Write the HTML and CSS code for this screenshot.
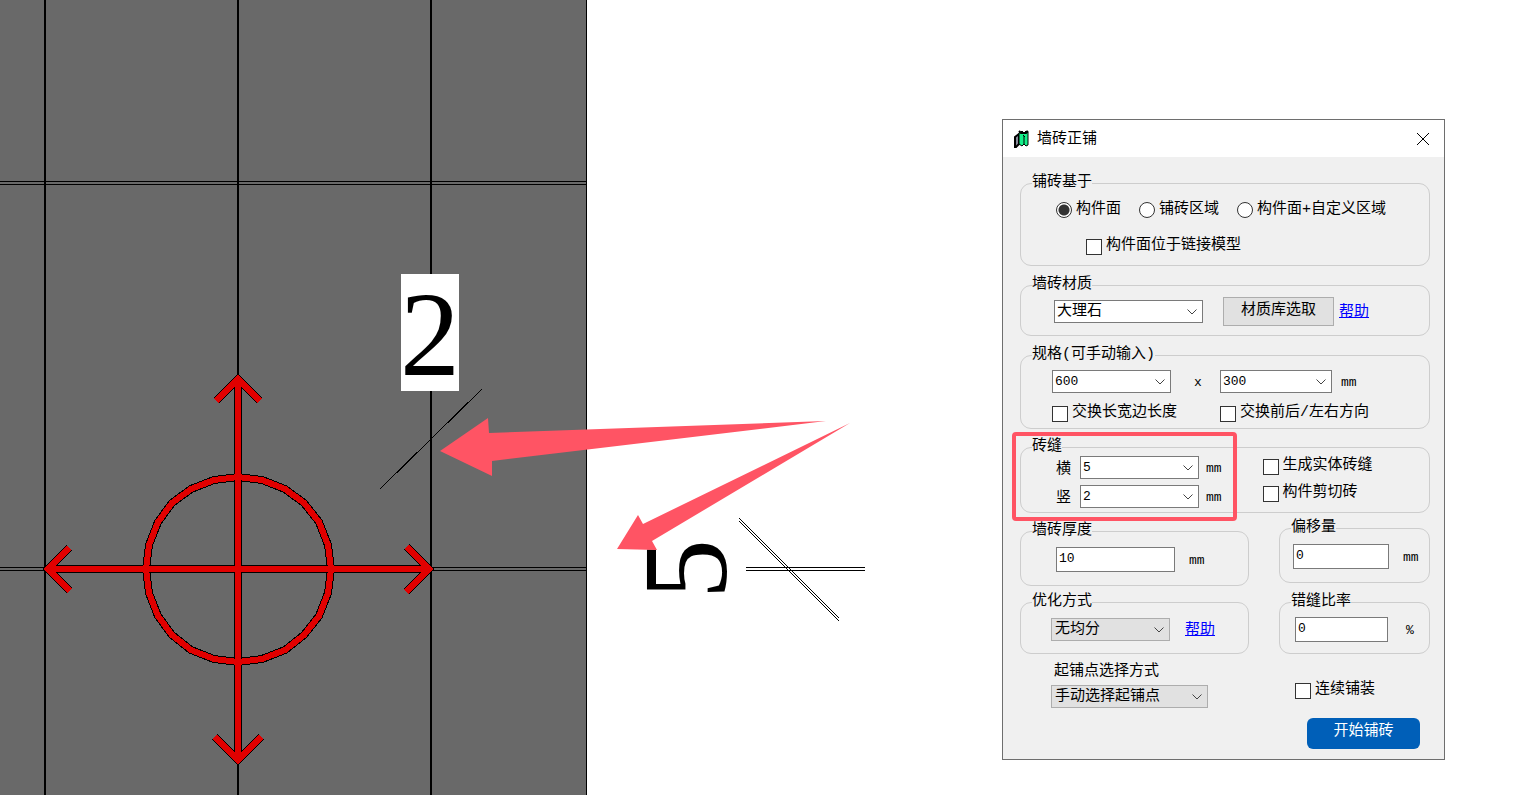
FILE: index.html
```html
<!DOCTYPE html>
<html lang="zh-CN">
<head>
    <meta charset="UTF-8">
    <meta name="viewport" content="width=device-width, initial-scale=1.0">
    <title>墙砖正铺</title>
    <link rel="stylesheet" href="styles.css">
</head>
<body>
    <main class="workspace">
        <svg class="drawing" role="img" aria-label="砖缝示意">
            <!-- wall and joints -->
            <rect class="wall" x="0" y="0" width="586" height="100%"/>
            <g class="joint" shape-rendering="crispEdges">
                <rect x="586" y="0" width="1" height="100%"/>
                <rect x="44" y="0" width="2" height="100%"/>
                <rect x="237" y="0" width="2" height="100%"/>
                <rect x="430" y="0" width="2" height="100%"/>
                <rect x="0" y="181" width="586" height="1"/>
                <rect x="0" y="184" width="586" height="1"/>
                <rect x="0" y="567" width="586" height="1"/>
                <rect x="0" y="570" width="586" height="1"/>
                <rect x="746" y="567" width="119" height="1"/>
                <rect x="746" y="570" width="119" height="1"/>
            </g>
            <g class="tick" shape-rendering="crispEdges">
                <path d="M380 489L482 389"/>
                <path d="M739 518L839 618M739 521L839 621"/>
            </g>

            <!-- base point marker: black outline under the red stroke -->
            <g class="marker marker-edge" shape-rendering="crispEdges">
                <polygon points="238,477 262,480 285,489 304,503 319,522 328,545 331,569 328,593 319,616 304,635 285,650 262,659 238,662 214,659 191,650 172,635 158,616 149,593 146,569 149,545 158,522 172,503 191,489 214,480"/>
                <path d="M48 569H429M69 548L48 569L70 591M407 547L429 569L406 592M238 379V760M216 401L238 379L260 401M215 737L238 760L261 737"/>
            </g>
            <g class="marker" shape-rendering="crispEdges">
                <polygon points="238,477 262,480 285,489 304,503 319,522 328,545 331,569 328,593 319,616 304,635 285,650 262,659 238,662 214,659 191,650 172,635 158,616 149,593 146,569 149,545 158,522 172,503 191,489 214,480"/>
                <path d="M48 569H429M69 548L48 569L70 591M407 547L429 569L406 592M238 379V760M216 401L238 379L260 401M215 737L238 760L261 737"/>
            </g>

            <!-- dimension numbers -->
            <rect class="plate" x="401" y="274" width="58" height="117"/>
            <text class="dimension" x="430" y="375" text-anchor="middle">2</text>
            <text class="dimension" transform="translate(726 569) rotate(-90)" text-anchor="middle">5</text>

            <g class="pointer">
                <polygon points="440,451 488,418 489,433 826,421 492,461 492,476"/>
                <polygon points="617,549 638,515 643,524 850,423 652,541 657,550"/>
            </g>
        </svg>

        <form class="dialog" aria-labelledby="dialogTitle">
            <header class="titlebar">
                <svg class="app-icon" viewBox="0 0 16 20" aria-hidden="true">
                    <path d="M1 8L5 5V15L2 18H1Z" fill="#889" stroke="#000" stroke-width="2"/>
                    <path d="M5 4L7 3L8 2L10 4L12 2L14 3V16L12 17L10 15L8 17L5 15Z" fill="#14f08a" stroke="#000"/>
                    <path d="M5 2L7 4H12L14 2" fill="none" stroke="#000" stroke-width="2"/>
                    <path d="M9 6L11 8M10 7V15" fill="none" stroke="#000"/>
                </svg>
                <h1 id="dialogTitle">墙砖正铺</h1>
                <button type="button" class="close" aria-label="关闭">
                    <svg width="12" height="12" viewBox="0 0 12 12"><path d="M0 0L12 12M12 0L0 12"/></svg>
                </button>
            </header>

            <div class="content">
                <fieldset class="group">
                    <legend>铺砖基于</legend>
                    <div class="base">
                        <div class="radios">
                            <label class="option"><input type="radio" name="base" checked>构件面</label>
                            <label class="option"><input type="radio" name="base">铺砖区域</label>
                            <label class="option"><input type="radio" name="base">构件面+自定义区域</label>
                        </div>
                        <label class="option check linked"><input type="checkbox">构件面位于链接模型</label>
                    </div>
                </fieldset>

                <fieldset class="group">
                    <legend>墙砖材质</legend>
                    <div class="material">
                        <select class="wide" aria-label="墙砖材质"><option>大理石</option></select>
                        <button type="button" class="pick">材质库选取</button>
                        <a href="#">帮助</a>
                    </div>
                </fieldset>

                <fieldset class="group tight">
                    <legend>规格(可手动输入)</legend>
                    <div class="size">
                        <div class="field">
                            <select class="number" aria-label="长度"><option>600</option></select>
                            <span class="unit times">x</span>
                        </div>
                        <div class="field">
                            <select class="number short" aria-label="宽度"><option>300</option></select>
                            <span class="unit">mm</span>
                        </div>
                        <label class="option check"><input type="checkbox">交换长宽边长度</label>
                        <label class="option check"><input type="checkbox">交换前后/左右方向</label>
                    </div>
                </fieldset>

                <fieldset class="group tight">
                    <legend>砖缝</legend>
                    <div class="joints">
                        <div class="joint-sizes">
                            <div class="field">
                                <label for="jointH">横</label>
                                <select class="number" id="jointH"><option>5</option></select>
                                <span class="unit">mm</span>
                            </div>
                            <div class="field">
                                <label for="jointV">竖</label>
                                <select class="number" id="jointV"><option>2</option></select>
                                <span class="unit">mm</span>
                            </div>
                        </div>
                        <div class="joint-options">
                            <label class="option check"><input type="checkbox">生成实体砖缝</label>
                            <label class="option check"><input type="checkbox">构件剪切砖</label>
                        </div>
                        <span class="highlight"></span>
                    </div>
                </fieldset>

                <div class="columns">
                    <div class="column left">
                        <fieldset class="group">
                            <legend>墙砖厚度</legend>
                            <div class="field thickness">
                                <input type="text" class="number" value="10" aria-label="墙砖厚度">
                                <span class="unit">mm</span>
                            </div>
                        </fieldset>
                        <fieldset class="group">
                            <legend>优化方式</legend>
                            <div class="field optimize">
                                <select class="flat" aria-label="优化方式"><option>无均分</option></select>
                                <a href="#">帮助</a>
                            </div>
                        </fieldset>
                    </div>
                    <div class="column right">
                        <fieldset class="group">
                            <legend>偏移量</legend>
                            <div class="field offset">
                                <input type="text" class="number" value="0" aria-label="偏移量">
                                <span class="unit">mm</span>
                            </div>
                        </fieldset>
                        <fieldset class="group">
                            <legend>错缝比率</legend>
                            <div class="field ratio">
                                <input type="text" class="number" value="0" aria-label="错缝比率">
                                <span class="unit">%</span>
                            </div>
                        </fieldset>
                    </div>
                </div>

                <div class="footer">
                    <div class="start-point">
                        <label for="startPoint">起铺点选择方式</label>
                        <select class="flat" id="startPoint"><option>手动选择起铺点</option></select>
                    </div>
                    <div class="actions">
                        <label class="option check"><input type="checkbox">连续铺装</label>
                        <button type="button" class="start">开始铺砖</button>
                    </div>
                </div>
            </div>
        </form>
    </main>
</body>
</html>
```
FILE: styles.css
```css
* {
    box-sizing: border-box;
}
body {
    margin: 0;
    background: #fff;
    color: #000;
    font-family: "Liberation Mono", "Noto Sans CJK SC", monospace;
    font-size: 15px;
    line-height: 18px;
}
.workspace {
    display: flex;
    align-items: flex-start;
    min-height: 100vh;
}

/* drawing */
.drawing {
    flex: 1;
    min-width: 0;
    height: 100vh;
}
.wall {
    fill: #696969;
}
.plate {
    fill: #fff;
}
.tick {
    fill: none;
    stroke: #000;
    stroke-width: 1;
}
.marker {
    fill: none;
    stroke: #e10000;
    stroke-width: 6;
}
.marker-edge {
    stroke: #000;
    stroke-width: 8;
}
.dimension {
    font-family: "Liberation Serif", serif;
    font-size: 120px;
}
.pointer {
    fill: #ff5464;
}

/* dialog */
.dialog {
    flex: 0 0 443px;
    margin: 119px 82px 0 0;
    border: 1px solid #6e6e6e;
    background: #f0f0f0;
}
.titlebar {
    display: flex;
    align-items: center;
    height: 37px;
    padding: 0 15px 0 11px;
    background: #fff;
}
.app-icon {
    width: 16px;
    height: 20px;
}
.titlebar h1 {
    flex: 1;
    margin: 3px 0 0 7px;
    font-size: 15px;
    font-weight: normal;
}
.close {
    display: flex;
    padding: 0;
    border: none;
    background: none;
}
.close path {
    stroke: #000;
    stroke-width: 1;
}
.content {
    padding: 17px 14px 10px 17px;
}

/* groups */
.group {
    min-width: 0;
    margin: 0 0 10px;
    padding: 0;
    border: 1px solid #cdcdcd;
    border-radius: 11px;
}
.group.tight {
    margin-bottom: 9px;
}
.group legend {
    margin-left: 11px;
    padding: 0;
}
.option {
    display: flex;
    align-items: center;
    gap: 4px;
}
.field {
    display: flex;
    align-items: center;
}
.unit {
    margin: 3px 0 0 9px;
    font-size: 13px;
}
.base {
    padding: 6px 0 8px 35px;
}
.radios {
    display: flex;
    gap: 18px;
    height: 24px;
}
.linked {
    margin: 14px 0 2px 30px;
}
.material {
    display: flex;
    align-items: center;
    padding: 3px 0 9px 33px;
}
.size {
    display: grid;
    grid-template-columns: 168px auto;
    row-gap: 10px;
    padding: 6px 0 6px 31px;
}
.unit.times {
    margin-left: 23px;
}
.joints {
    position: relative;
    display: flex;
    gap: 41px;
    padding: 0 0 4px 35px;
}
.joint-sizes {
    display: flex;
    flex-direction: column;
    gap: 6px;
}
.joint-sizes label {
    width: 24px;
    padding-top: 4px;
}
.joint-sizes .unit {
    margin-left: 7px;
}
.joint-options {
    display: flex;
    flex-direction: column;
    gap: 8px;
}
.highlight {
    position: absolute;
    top: -24px;
    left: -9px;
    width: 225px;
    height: 89px;
    border: 4px solid #ff5464;
    border-radius: 4px;
    pointer-events: none;
}
.columns {
    display: flex;
    justify-content: space-between;
    align-items: flex-end;
}
.column {
    display: flex;
    flex-direction: column;
    gap: 7px;
    width: 229px;
}
.column .group {
    margin: 0;
}
.column.right {
    gap: 10px;
    width: 151px;
    margin-top: -5px;
}
.thickness {
    padding: 7px 0 13px 35px;
}
.optimize {
    padding: 7px 0 12px 30px;
}
.offset {
    padding: 7px 0 13px 13px;
}
.ratio {
    padding: 6px 0 11px 15px;
}
.thickness .unit,
.offset .unit {
    margin-left: 14px;
}
.ratio .unit {
    margin-left: 18px;
}
.optimize a {
    margin-left: 15px;
}
.material a,
.optimize a {
    padding-top: 3px;
}

/* controls */
input,
select,
button {
    margin: 0;
    font: inherit;
    color: inherit;
}
select {
    appearance: none;
    width: 119px;
    height: 23px;
    padding: 0 20px 0 2px;
    border: 1px solid #7a7a7a;
    border-radius: 0;
    background: #fff url("data:image/svg+xml,%3Csvg xmlns='http://www.w3.org/2000/svg' width='10' height='6'%3E%3Cpath d='M.5.5L5 5L9.500.5' fill='none' stroke='%23444'/%3E%3C/svg%3E") no-repeat right 5px center;
}
select.wide {
    width: 149px;
}
select.short {
    width: 112px;
}
select.flat {
    padding-left: 3px;
    border-color: #adadad;
    background-color: #e1e1e1;
}
input[type="text"] {
    width: 119px;
    height: 25px;
    padding: 0 2px 2px;
    border: 1px solid #7a7a7a;
}
.offset input[type="text"] {
    width: 96px;
}
.ratio input[type="text"] {
    width: 93px;
}
select.number,
input[type="text"].number {
    font-size: 13px;
}
input[type="radio"],
input[type="checkbox"] {
    appearance: none;
    flex: none;
    width: 16px;
    height: 16px;
    border: 1px solid #333;
    background: #fff;
}
input[type="radio"] {
    border-radius: 50%;
}
input[type="radio"]:checked {
    background: radial-gradient(circle, #333 5px, #fff 6px);
}
.check input[type="checkbox"] {
    margin-top: 3px;
}
.pick {
    width: 111px;
    height: 29px;
    margin: 0 5px 0 20px;
    padding: 0 0 2px;
    border: 1px solid #adadad;
    background: #e1e1e1;
}
a {
    color: #00f;
}

/* bottom row */
.footer {
    display: flex;
    justify-content: space-between;
    padding: 9px 10px 0 31px;
}
.start-point {
    display: flex;
    flex-direction: column;
    gap: 4px;
}
.start-point label {
    padding-left: 3px;
}
.start-point select {
    width: 157px;
}
.actions {
    display: flex;
    flex-direction: column;
    gap: 19px;
    padding-top: 17px;
    width: 125px;
}
.start {
    align-self: flex-end;
    width: 113px;
    height: 31px;
    padding: 0 0 3px;
    border: none;
    border-radius: 6px;
    background: #005fb8;
    color: #fff;
}
```
